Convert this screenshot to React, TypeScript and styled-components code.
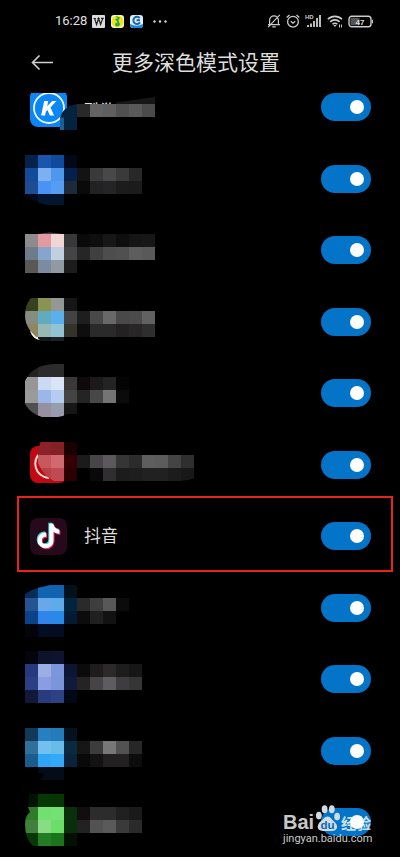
import React, { useId } from "react";
import styled, { createGlobalStyle } from "styled-components";

const GlobalStyle = createGlobalStyle`
  *, *::before, *::after { box-sizing: border-box; }
  body {
    margin: 0;
    background: #000;
    color: #dedede;
    font-family: "Noto Sans CJK SC", "Noto Sans", sans-serif;
  }
`;

const Screen = styled.div`
  display: flex;
  flex-direction: column;
  height: 100vh;
  position: relative;
  overflow: hidden;
  background: #000;
`;

const StatusBar = styled.div`
  display: flex;
  flex: none;
  align-items: center;
  justify-content: space-between;
  height: 42px;
  padding: 0 26px 0 55px;
`;

const StatusGroup = styled.div<{ $gap: number }>`
  display: flex;
  align-items: center;
  gap: ${(p) => p.$gap}px;

  svg { display: block; flex: none; }
`;

const Clock = styled.time`
  font: 400 13px/20px Roboto, sans-serif;
  color: #e0e0e0;
  width: 31px;
  white-space: nowrap;
`;

const Header = styled.header`
  display: grid;
  grid-template-columns: 25px 1fr 25px;
  flex: none;
  align-items: center;
  height: 40px;
  margin-bottom: 11px;
  padding: 0 38px 0 30px;
`;

const BackButton = styled.button`
  display: block;
  padding: 0;
  border: 0;
  background: none;
  color: #d0d0d0;
  cursor: pointer;

  svg { display: block; }
`;

const Title = styled.h1`
  margin: 0;
  padding-bottom: 3px;
  font-size: 21px;
  line-height: 32px;
  font-weight: 400;
  text-align: center;
  white-space: nowrap;
`;

const ListViewport = styled.main`
  flex: 1;
  min-height: 0;
  overflow: hidden;
`;

const AppList = styled.ul`
  list-style: none;
  margin: -22px 0 0;
  padding: 0;
`;

const AppItem = styled.li<{ $marked?: boolean }>`
  position: relative;
  height: 72px;

  &:nth-child(even) { height: 71px; }

  &::after {
    content: ${(p) => (p.$marked ? '""' : "none")};
    position: absolute;
    inset: -4px 7px 0 17px;
    border: 2px solid #e8231b;
    pointer-events: none;
  }
`;

const AppRow = styled.label`
  display: flex;
  align-items: center;
  justify-content: space-between;
  height: 100%;
  padding: 0 29px 0 20px;
`;

const Mosaic = styled.svg`
  display: block;
  flex: none;
`;

const AppIdentity = styled.span`
  display: flex;
  align-items: center;
  gap: 17px;
  padding-left: 10px;

  svg { display: block; }
`;

const AppName = styled.span`
  font-size: 17px;
  line-height: 24px;
  padding-bottom: 2px;
`;

const Switch = styled.input`
  appearance: none;
  flex: none;
  display: flex;
  align-items: center;
  justify-content: flex-start;
  width: 50px;
  height: 28px;
  margin: 0;
  padding: 0 7px;
  border-radius: 14px;
  background: #333;
  cursor: pointer;

  &::after {
    content: "";
    width: 14px;
    height: 14px;
    border-radius: 50%;
    background: #fff;
  }

  &:checked {
    justify-content: flex-end;
    background: #0474c8;
  }
`;

const Watermark = styled.div`
  position: absolute;
  right: 29px;
  bottom: 11px;
  width: 88px;
  color: rgba(255, 255, 255, 0.8);
  pointer-events: none;
`;

const WatermarkLogo = styled.div`
  display: flex;
  align-items: flex-end;
  justify-content: space-between;
  height: 28px;

  svg { display: block; flex: none; }
`;

const LogoLatin = styled.span`
  font: 700 20px/20px "Liberation Sans", sans-serif;
`;

const LogoHan = styled.span`
  font-size: 15px;
  line-height: 18px;
  font-weight: 700;
  white-space: nowrap;
`;

const WatermarkSite = styled.div`
  font: 400 11px/14px Roboto, sans-serif;
  white-space: nowrap;
`;

const CELL = 13;

type Band = { y: number; x?: number; h?: number; cells: string };
type HiddenApp = {
  top: number;
  clip?: string;
  bands: Band[];
  under?: React.ReactNode;
  over?: React.ReactNode;
};

function CensoredApp({ top, clip, bands, under, over }: HiddenApp) {
  const id = useId();
  return (
    <Mosaic width="180" height="71" viewBox={`20 ${top} 180 71`} role="img" aria-label="App">
      {clip && (
        <clipPath id={id}>
          <path d={clip} />
        </clipPath>
      )}
      {under}
      <g clipPath={clip ? `url(#${id})` : undefined} shapeRendering="crispEdges">
        {bands.map((band) =>
          band.cells.split(" ").map((c, i) =>
            c === "-" ? null : (
              <rect
                key={`${band.y}-${i}`}
                x={(band.x ?? 25) + i * CELL}
                y={band.y}
                width={CELL}
                height={band.h ?? CELL}
                fill={`#${c}`}
              />
            )
          )
        )}
      </g>
      {over}
    </Mosaic>
  );
}

const KugouMark = (
  <>
    <rect x="30" y="88" width="37" height="38" rx="8" fill="#0a86f5" />
    <circle cx="49" cy="107" r="15" fill="none" stroke="#e9f6ff" strokeWidth="1.8" />
    <path d="M44.2 100h4l-1 5.200 5-5.200h4.300l-6 6.400 3.600 8.100h-4.200l-2.400-5.500-1.700 1.800-.7 3.700h-4z" fill="#fff" />
    <text x="84" y="116" fontSize="17" fill="#dedede">酷狗</text>
    <path d="M60 129V116.500C62 109 69 103 80 103V129z" fill="#04233e" />
    <path d="M60 116.500h4V129h-4z" fill="#1d5f91" />
    <path d="M77 103h13v14H77z" fill="#000" />
    <path d="M77 116h80v14H77z" fill="#000" />
    <path d="M116 101.500L155 96v8h-39z" fill="#171717" />
  </>
);

const RedMark = (
  <>
    <rect x="30" y="446" width="37" height="37" rx="8" fill="#c20812" />
    <path d="M40 453c-8 8-6 23 9 25" fill="none" stroke="#f4dcdc" strokeWidth="2" />
    <path d="M64 441h13v42H64z" fill="#000" />
  </>
);

const hiddenBefore: HiddenApp[] = [
  {
    top: 71,
    under: KugouMark,
    bands: [{ y: 103, x: 77, cells: "292929 636363 5f5f5f 505050 595959 4b4b4b" }],
  },
  {
    top: 143,
    clip: "M25 150H200V215H64V205H47Q38 203 25 197Z",
    bands: [
      { y: 155, cells: "04224a 1a55ae 104a9c 020818" },
      { y: 168, cells: "114b9a 7cb0ef 4f97ec 03204e 131313 3a3a3a 484848 3a3a3a 282828" },
      { y: 181, cells: "1d4d90 4893f5 559df2 1e2a3a 0a0a0a 222224 252525 1c1c1c 1b1b1b" },
      { y: 194, cells: "020a1a 04152f 04152f" },
    ],
  },
  {
    top: 214,
    under: <path d="M38 233q12-3 24 0z" fill="#47444a" />,
    bands: [
      { y: 233, cells: "8f8b8d e09aa0 f2d6d6 383838 0a0a0a 0e0e0e 171717 0e0e0e 151515 171717" },
      { y: 246, cells: "6e7b8b 85a5cf c0d0df 444446 262626 404040 4d4d4d 505050 5d5d5d 595959" },
      { y: 259, cells: "5a5757 7d8ba0 8f9aa2 1c1c1c" },
    ],
  },
  {
    top: 286,
    clip: "M31 298H200V350H52L40 340Q25 329 25 316Q25 304 31 298Z",
    under: <path d="M30 331q3 9 11 9l-6-8z" fill="#f1efe4" />,
    bands: [
      { y: 298, cells: "36421f 8a9450 929995 161616" },
      { y: 311, cells: "838d80 62aabf 5ab0ec 434343 1e1e1e 484848 686868 494949 4b4b4b 616161" },
      { y: 324, cells: "8f8562 98b8b4 90c4d2 33332a 0e0e0e 2a2a2a 2a2a2a 242122 282627 2e2e2e" },
      { y: 337, h: 4, cells: "- 16171a 1c2226" },
    ],
  },
  {
    top: 357,
    clip: "M25 380Q32 364 54 363H200V402H77V413L67 413Q62 416 58 416H42Q31 413 25 403Z",
    bands: [
      { y: 363, cells: "222222 2b2b2b 2b2b2b" },
      { y: 376, cells: "979595 cad9f4 d9e4f8 3a3839 0c0a0b 1b191a 232323 040404" },
      { y: 389, cells: "9a9a9a 9bb6ea b4ccf0 444444 242424 484848 747474 0b0b0b" },
      { y: 402, h: 14, cells: "505050 95919e 979dac 161616" },
    ],
  },
  {
    top: 429,
    under: RedMark,
    clip: "M41 441H200V477Q190 480 180 481H54Q44 477 38 463V449Z",
    bands: [
      { y: 442, x: 38, cells: "8a2228 852025 180003" },
      { y: 455, x: 38, cells: "c9585e d06a70 340005 1b1b1c 474547 5c595c 353535 2c2c2c 5e5e5e 5c5c5c 444444 2f2f2f" },
      { y: 468, x: 38, cells: "b93f46 bf4a51 2c0003 - 0a090a 302e30 1c1c1c 1e1e1e 212121 212121 1c1c1c 181818" },
    ],
  },
];

const hiddenAfter: HiddenApp[] = [
  {
    top: 572,
    clip: "M25 594Q34 588 42 587L50 585H200V643H25Z",
    bands: [
      { y: 585, cells: "062c58 0f64b4 1262b0 02101a" },
      { y: 598, cells: "245592 68a8e8 5cacea 02253f 2a2a2a 3e3e3e 585858 0b0b0b" },
      { y: 611, cells: "0c4288 2f85ec 2a88e8 051b33 0c0c0c 202020 121212" },
      { y: 624, cells: "02040a 020d22 020d22" },
    ],
  },
  {
    top: 643,
    bands: [
      { y: 650, cells: "04050c 0c132a 0e1430" },
      { y: 663, cells: "27387e 9caee2 7c96dc 0c1534 0b0b0b 1f1c1e 2c292b 1d1d1d 161616" },
      { y: 676, cells: "2a3f85 8a9de0 7b95da 101a3a 242424 464446 5e5c5e 3e3c3e 353535" },
      { y: 689, cells: "11183a 283c80 2c4284 040816" },
    ],
  },
  {
    top: 715,
    bands: [
      { y: 728, cells: "103a58 2480c0 227cba 03121c" },
      { y: 741, cells: "30709a 72c0ee 68bcea 0a2a42 161616 3c3c3c 777777 525252 272727" },
      { y: 754, cells: "1b5c8c 2fa5f6 33aaf8 0a2338 090909 131313 222021 222021 0c0c0c" },
      { y: 767, cells: "- 040c18 040c18" },
    ],
    over: <path d="M36 773h6l2 3-5 4h-3z" fill="#000" />,
  },
  {
    top: 786,
    clip: "M29 793H200V845H33Q25 838 25 823Q25 815 30 811L28 806Z",
    bands: [
      { y: 793, cells: "041204 063806 063606" },
      { y: 806, cells: "2e7c2a 72e070 74e272 08300a 120e10 2c2c2c 2c2c2c 202020 1a1a1a" },
      { y: 819, cells: "407f3c 88dc86 6ade68 082f0a 222222 525252 5a5a5a 3a3a3a 2a2a2a" },
      { y: 832, cells: "063806 247c24 1c741a 031003" },
    ],
  },
];

const NOTE =
  "M9 0h1.98c.144.715.54 1.617 1.235 2.512C12.895 3.389 13.797 4 15 4v2c-1.753 0-3.07-.814-4-1.829V11a5 5 0 1 1-5-5v2a3 3 0 1 0 3 3z";

function DouyinIcon() {
  return (
    <svg width="37" height="37" viewBox="0 0 38 38" aria-hidden="true">
      <rect width="38" height="38" rx="8" fill="#26091b" />
      <g strokeWidth=".9">
        <path d={NOTE} transform="translate(6 5.500) scale(1.5)" fill="#35dcd8" stroke="#35dcd8" />
        <path d={NOTE} transform="translate(8 7.500) scale(1.5)" fill="#f0245a" stroke="#f0245a" />
        <path d={NOTE} transform="translate(7 6.500) scale(1.5)" fill="#fff" stroke="#fff" />
      </g>
    </svg>
  );
}

function HiddenItem(props: HiddenApp) {
  return (
    <AppItem>
      <AppRow>
        <CensoredApp {...props} />
        <Switch type="checkbox" role="switch" defaultChecked />
      </AppRow>
    </AppItem>
  );
}

function StatusApps() {
  return (
    <>
      <svg width="13" height="13" viewBox="0 0 13 13" aria-hidden="true">
        <rect width="13" height="13" rx="1" fill="#dcdcdc" />
        <path d="M1.500 3.500h2.500M2.600 3.500l2 6 2-6 2 6 2.200-6.200M5.300 3.500h2.500M9 3.300h2.800" fill="none" stroke="#222" strokeWidth="1.200" />
      </svg>
      <svg width="13" height="13" viewBox="0 0 13 13" aria-hidden="true">
        <rect width="13" height="13" rx="3" fill="#f4f6d0" />
        <circle cx="6.500" cy="6.500" r="6" fill="#f2e21a" />
        <path d="M4.500 1l4.500 1.500-1.500 3 1.500 4c-1 2.500-4.500 2.500-5 .3 0-1.800 1.500-2.500 2.600-2.300L4 4l2.500-.5z" fill="#1fae55" />
      </svg>
      <svg width="13" height="13" viewBox="0 0 13 13" aria-hidden="true">
        <rect width="13" height="13" rx="3" fill="#dff0fb" />
        <path d="M0 9q6.500 3.500 13 0v1a3 3 0 0 1-3 3H3a3 3 0 0 1-3-3z" fill="#1b86dc" />
        <path d="M9.800 3.200A3.600 3.600 0 1 0 10 7.400M6.500 5.300H10" fill="none" stroke="#1568b0" strokeWidth="2" />
      </svg>
      <svg width="26" height="13" viewBox="0 0 26 13" fill="#d4d4d4" aria-hidden="true">
        <circle cx="5.500" cy="6.500" r="1.200" />
        <circle cx="11" cy="6.500" r="1.200" />
        <circle cx="16.500" cy="6.500" r="1.200" />
      </svg>
    </>
  );
}

function StatusIndicators() {
  return (
    <>
      <svg width="14" height="14" viewBox="0 0 14 14" fill="none" stroke="#ccc" strokeWidth="1.200" aria-hidden="true">
        <path d="M1 10.700h12M2.600 10.500V6.200a4.400 4.400 0 0 1 8.800 0v4.300M5.300 12.800h3.400M12.800.8L1.200 13.200" />
      </svg>
      <svg width="14" height="14" viewBox="0 0 14 14" fill="none" stroke="#ccc" strokeWidth="1.300" aria-hidden="true">
        <circle cx="7" cy="7.700" r="5.400" />
        <path d="M4.800 7.200L7 9.200l2.200-2M.7 3.500l2.800-2.400M13.300 3.500l-2.800-2.400" />
      </svg>
      <svg width="17" height="14" viewBox="0 0 17 14" aria-hidden="true">
        <text x="0" y="5" fontFamily="Liberation Sans, sans-serif" fontWeight="700" fontSize="6" fill="#ccc">HD</text>
        <path d="M2 11h2v2H2zM5 9.500h2V13H5zM8 7h2v6H8zM11 4h2v9h-2zM14 1h2v12h-2z" fill="#bbb" />
      </svg>
      <svg width="16" height="14" viewBox="0 0 16 14" fill="none" stroke="#ccc" strokeWidth="1.600" aria-hidden="true">
        <path d="M.8 5.300a10 10 0 0 1 14.200 0M3.200 7.900a6.500 6.500 0 0 1 9.400 0M5.500 10.300a3.400 3.400 0 0 1 4.800 0" />
        <path d="M6.300 11h3.200l-1.600 2z" fill="#ccc" stroke="none" />
        <path d="M12.500 10.500v3M14.500 10.500v3" strokeWidth="1" />
      </svg>
      <svg width="26" height="13" viewBox="0 0 26 13" aria-hidden="true">
        <rect x="1" y="1.200" width="22" height="10.600" rx="2.800" fill="none" stroke="#ccc" strokeWidth="1.400" />
        <rect x="2.500" y="2.700" width="9" height="7.600" fill="#555" />
        <path d="M24.500 4.800v3.500" stroke="#ccc" />
        <text x="12" y="9.600" textAnchor="middle" fontFamily="Liberation Sans, sans-serif" fontWeight="700" fontSize="8" fill="#ddd">47</text>
      </svg>
    </>
  );
}

export default function App() {
  return (
    <>
      <GlobalStyle />
      <Screen>
        <StatusBar>
          <StatusGroup $gap={6}>
            <Clock>16:28</Clock>
            <StatusApps />
          </StatusGroup>
          <StatusGroup $gap={5}>
            <StatusIndicators />
          </StatusGroup>
        </StatusBar>
        <Header>
          <BackButton type="button" aria-label="Back">
            <svg width="25" height="18" viewBox="0 0 25 18" fill="none" stroke="currentColor" strokeWidth="1.600">
              <path d="M23 9.500H3M9.500 2.500l-7 7 7 7" />
            </svg>
          </BackButton>
          <Title>更多深色模式设置</Title>
        </Header>
        <ListViewport>
          <AppList>
            {hiddenBefore.map((app) => (
              <HiddenItem key={app.top} {...app} />
            ))}
            <AppItem $marked>
              <AppRow>
                <AppIdentity>
                  <DouyinIcon />
                  <AppName>抖音</AppName>
                </AppIdentity>
                <Switch type="checkbox" role="switch" defaultChecked />
              </AppRow>
            </AppItem>
            {hiddenAfter.map((app) => (
              <HiddenItem key={app.top} {...app} />
            ))}
          </AppList>
        </ListViewport>
        <Watermark>
          <WatermarkLogo>
            <LogoLatin>Bai</LogoLatin>
            <svg width="25" height="29" viewBox="0 0 26 30">
              <g fill="#d2dce4">
                <ellipse cx="4" cy="13" rx="3" ry="4" />
                <ellipse cx="10" cy="6.500" rx="3" ry="4.200" />
                <ellipse cx="17.500" cy="6.500" rx="3" ry="4.200" />
                <ellipse cx="23" cy="14" rx="3" ry="4" />
                <path d="M13 14c3 0 4.500 3 6.500 5 6 5 3.500 10-1.500 10H8c-6 0-7-6-2-10 2.500-2 4-5 7-5z" />
              </g>
              <text x="13" y="27" textAnchor="middle" fontFamily="Liberation Sans, sans-serif" fontWeight="700" fontSize="12" fill="#0868b4">du</text>
            </svg>
            <LogoHan>经验</LogoHan>
          </WatermarkLogo>
          <WatermarkSite>jingyan.baidu.com</WatermarkSite>
        </Watermark>
      </Screen>
    </>
  );
}
